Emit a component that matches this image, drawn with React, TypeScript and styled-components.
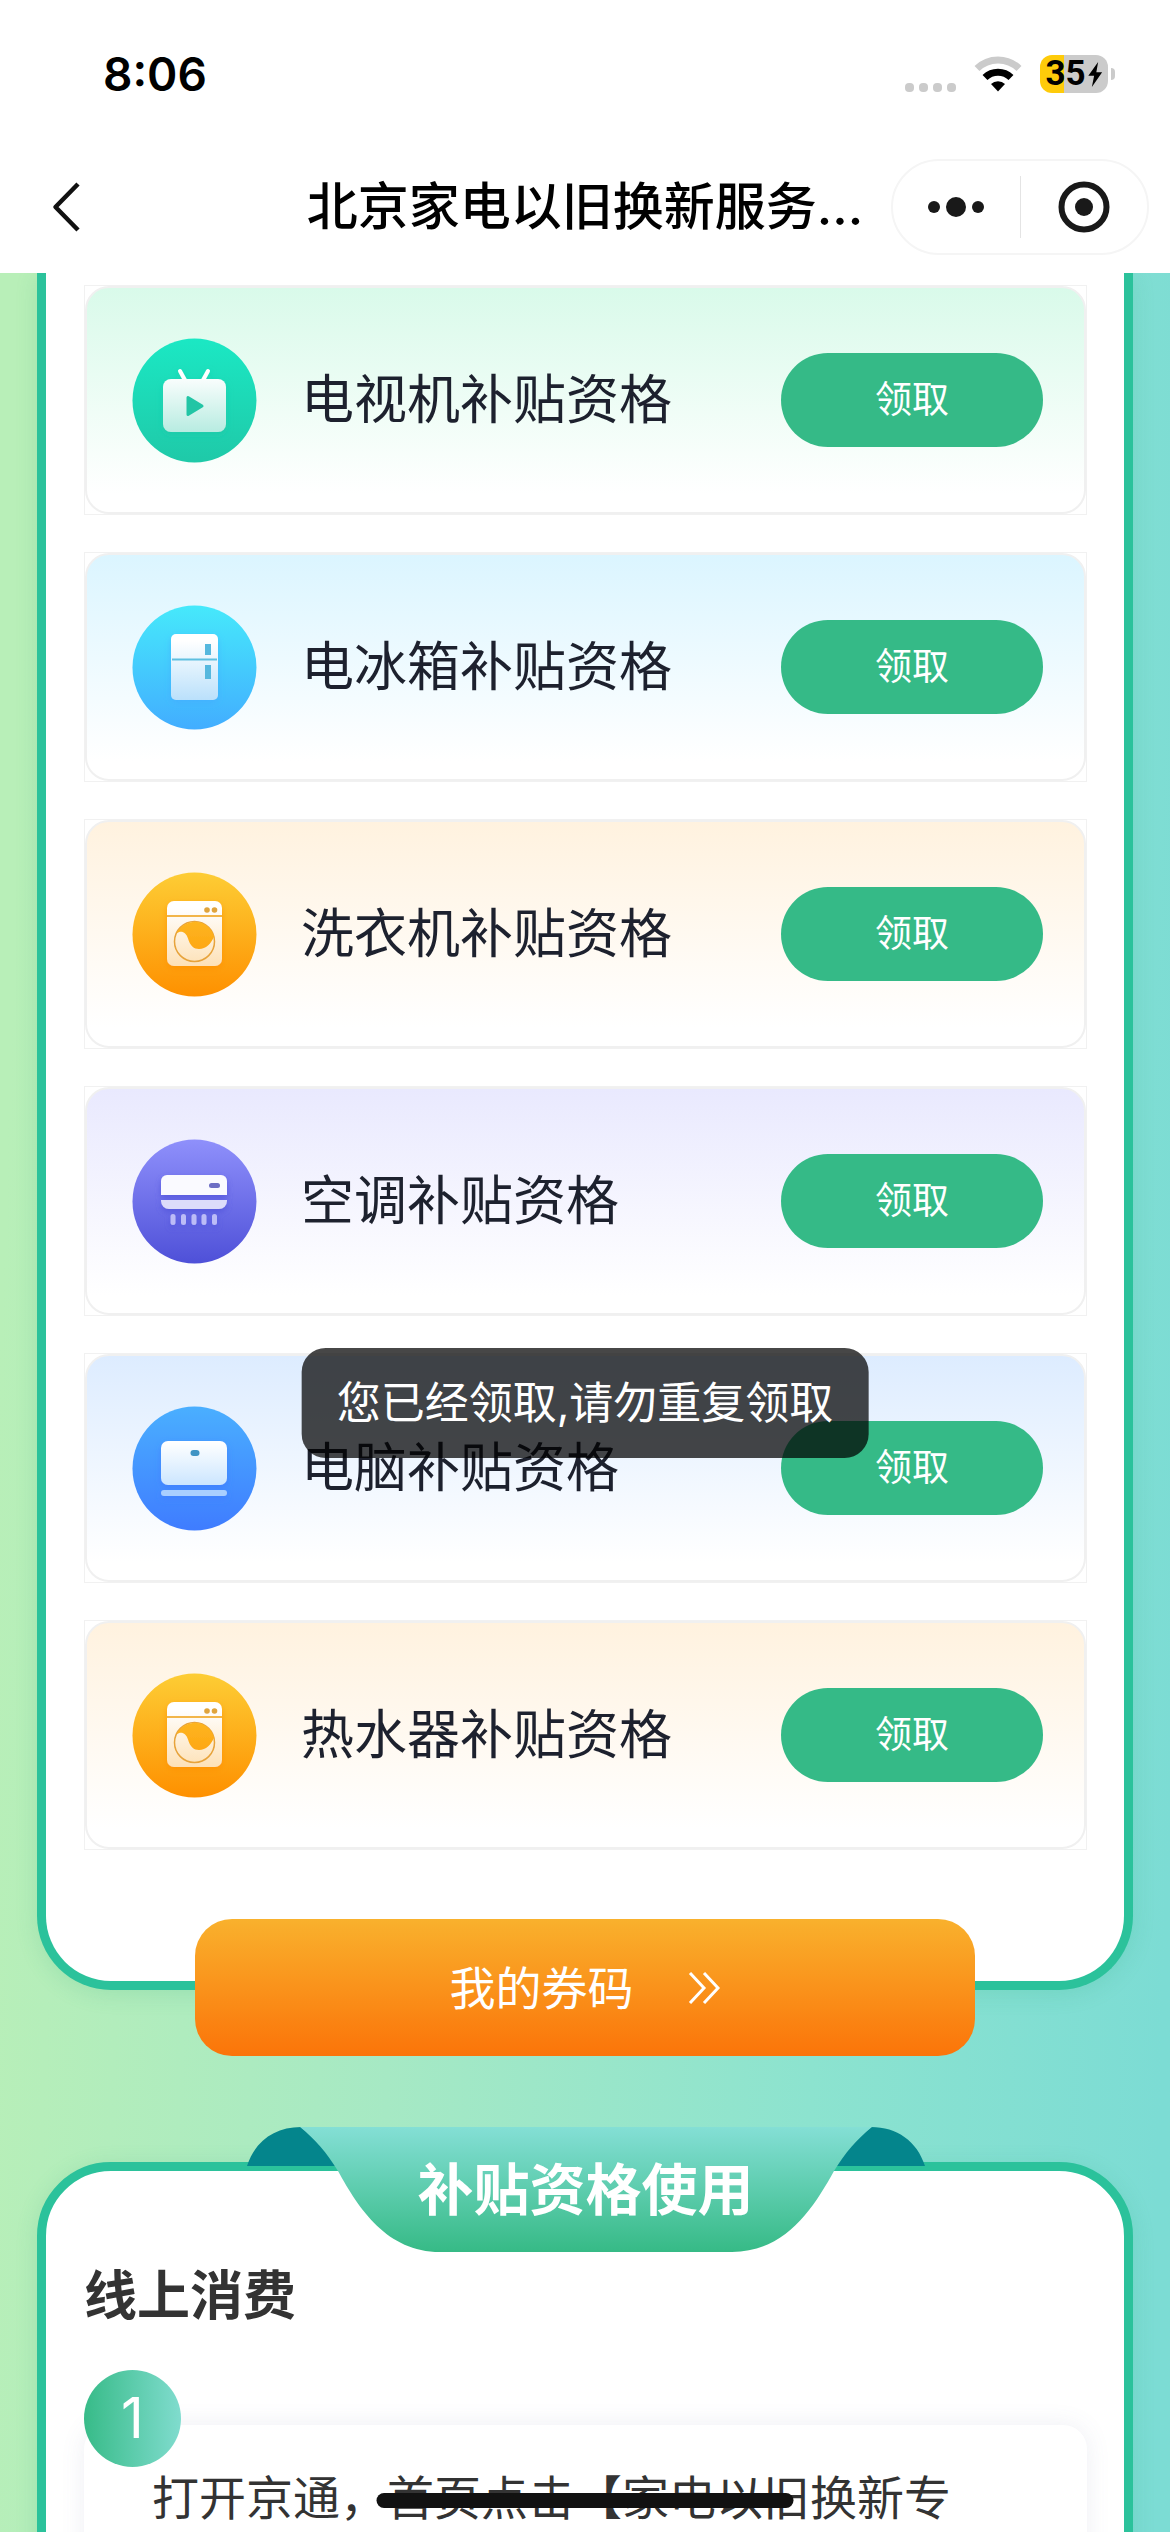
import React from "react";
import styled, { createGlobalStyle } from "styled-components";

const GlobalStyle = createGlobalStyle`
  *, *::before, *::after { box-sizing: border-box; }
  body {
    margin: 0;
    font-family: Inter, "Noto Sans CJK SC", sans-serif;
    color: #333;
    background: #fff;
  }
  h1, h2, h3, p, ul { margin: 0; padding: 0; }
  ul { list-style: none; }
  button {
    font: inherit;
    color: inherit;
    border: 0;
    padding: 0;
    background: none;
    cursor: pointer;
  }
  svg { display: block; }
`;

const Screen = styled.div`
  position: relative;
  display: flex;
  flex-direction: column;
  height: 100vh;
  overflow: hidden;
`;

const Header = styled.header`
  flex: none;
  background: #fff;
  color: #000;
`;

const StatusBar = styled.div`
  display: flex;
  align-items: center;
  justify-content: space-between;
  height: 141px;
  padding: 7px 55px 0 103px;
`;

const Clock = styled.time`
  font-size: 46px;
  line-height: 56px;
  font-weight: 600;
`;

const StatusIcons = styled.div`
  display: flex;
  align-items: center;
  gap: 18px;
`;

const Battery = styled.div`
  display: flex;
  align-items: center;
  gap: 3px;
`;

const BatteryBody = styled.div`
  display: flex;
  align-items: center;
  justify-content: center;
  gap: 1px;
  width: 68px;
  height: 38px;
  border-radius: 12px;
  background: linear-gradient(90deg, #fecb0a 35%, #cbcbcb 35%);
  font-family: Roboto, sans-serif;
  font-size: 35px;
  line-height: 38px;
  font-weight: 700;
`;

const BatteryTip = styled.div`
  width: 4px;
  height: 12px;
  border-radius: 0 4px 4px 0;
  background: #cbcbcb;
`;

const NavBar = styled.nav`
  display: grid;
  grid-template-columns: 1fr auto 1fr;
  align-items: center;
  height: 132px;
  padding: 0 21px;
`;

const BackButton = styled.button`
  justify-self: start;
  padding: 0 31px;
`;

const NavTitle = styled.h1`
  font-size: 51px;
  line-height: 74px;
  font-weight: 500;
  white-space: nowrap;
`;

const Capsule = styled.div`
  justify-self: end;
  display: flex;
  align-items: center;
  width: 258px;
  height: 96px;
  border: 2px solid #f5f5f5;
  border-radius: 48px;
`;

const CapsuleButton = styled.button`
  flex: 1;
  display: flex;
  justify-content: center;
  & + & {
    border-left: 1px solid #e4e4e4;
  }
`;

const View = styled.div`
  position: relative;
  flex: 1;
  min-height: 0;
`;

const Content = styled.main`
  height: 100%;
  padding: 0 37px;
  overflow-y: auto;
  scrollbar-width: none;
  background: linear-gradient(92deg, #b8efb8 3%, #a6e9c4 36%, #8ce3cf 70%, #7cdcd4 98%);
`;

const Card = styled.section<{ $scrolled?: boolean }>`
  padding: ${(p) => (p.$scrolled ? "12px 37px 131px 38px" : "0 37px 44px 38px")};
  border: 9px solid #2bc29b;
  border-top-width: ${(p) => (p.$scrolled ? "0" : "9px")};
  border-radius: ${(p) => (p.$scrolled ? "0 0 74px 74px" : "74px")};
  background: #fff;
  box-shadow: 0 4px 22px rgba(40, 160, 110, 0.16);
`;

const SubsidyList = styled.ul`
  display: flex;
  flex-direction: column;
  gap: 37px;
`;

const SubsidyFrame = styled.li`
  border: 1px solid #f1f1f1;
`;

const SubsidyRow = styled.div<{ $tint: string }>`
  display: flex;
  align-items: center;
  gap: 44px;
  height: 228px;
  padding: 0 41px 0 45px;
  border: 2px solid #f0f0f0;
  border-radius: 24px;
  background: linear-gradient(180deg, ${(p) => p.$tint}, #fff 92%);
`;

const SubsidyName = styled.h2`
  flex: 1;
  font-size: 53px;
  line-height: 74px;
  font-weight: 400;
  color: #1d212e;
  white-space: nowrap;
`;

const ClaimButton = styled.button`
  width: 262px;
  height: 94px;
  border-radius: 47px;
  background: #35ba87;
  color: #fff;
  font-size: 37px;
  line-height: 56px;
`;

const CouponButton = styled.button`
  position: relative;
  display: flex;
  align-items: center;
  justify-content: center;
  gap: 54px;
  width: 780px;
  max-width: 100%;
  height: 137px;
  margin: -71px auto 106px;
  border-radius: 37px;
  background: linear-gradient(180deg, #f9b12d, #fb7409);
  color: #fff;
  font-size: 46px;
  line-height: 74px;
`;

const Banner = styled.div`
  position: relative;
  display: grid;
  place-items: center;
  width: 678px;
  height: 125px;
  margin: -44px auto 7px;
  & > * {
    grid-area: 1 / 1;
  }
`;

const BannerTitle = styled.h2`
  position: relative;
  font-size: 56px;
  line-height: 74px;
  font-weight: 700;
  color: #fff;
`;

const SectionTitle = styled.h3`
  font-size: 53px;
  line-height: 74px;
  font-weight: 700;
`;

const Step = styled.div`
  display: flex;
  flex-direction: column;
  margin-top: 37px;
`;

const StepNumber = styled.span`
  position: relative;
  width: 97px;
  height: 97px;
  margin-bottom: -42px;
  border-radius: 50%;
  background: linear-gradient(90deg, #37bb88, #80dcce);
  color: #fff;
  font-size: 56px;
  line-height: 97px;
  text-align: center;
`;

const StepBody = styled.p`
  min-height: 300px;
  padding: 36px 68px;
  border-radius: 24px;
  background: #fff;
  box-shadow: 0 0 24px rgba(90, 100, 150, 0.1);
  font-size: 47px;
  line-height: 74px;
`;

const Toast = styled.div`
  position: absolute;
  top: 50%;
  left: 50%;
  transform: translate(-50%, -50%);
  padding: 18px 35px;
  border-radius: 24px;
  background: rgba(0, 0, 0, 0.72);
  color: #fff;
  font-size: 44px;
  line-height: 74px;
  white-space: nowrap;
`;

const HomeIndicator = styled.div`
  position: absolute;
  bottom: 24px;
  left: 50%;
  width: 417px;
  height: 15px;
  border-radius: 8px;
  background: #111;
  transform: translateX(-50%);
`;

type Kind = "tv" | "fridge" | "washer" | "ac" | "pc";

const discs: Record<Kind, [string, string]> = {
  tv: ["#1be8c4", "#1fc9a8"],
  fridge: ["#46e9fb", "#42adff"],
  washer: ["#fdcd35", "#fe9000"],
  ac: ["#8f90fb", "#4e50d8"],
  pc: ["#4aafff", "#3f7cff"],
};

const metals: Record<Kind, string> = {
  tv: "#b5ebe0",
  fridge: "#b9e0fb",
  washer: "#fde0b4",
  ac: "#cfcff8",
  pc: "#b7dcff",
};

function Glyph({ kind, body, ink }: { kind: Kind; body: string; ink: string }) {
  switch (kind) {
    case "tv":
      return (
        <>
          <path d="M48 33l6 11M76 33l-6 11" stroke="#fff" strokeWidth="4" strokeLinecap="round" />
          <rect x="31" y="41" width="63" height="53" rx="8" fill={body} />
          <path d="M56 59.500v17l14-8.500z" fill="#22c5a5" stroke="#22c5a5" strokeWidth="3" strokeLinejoin="round" />
        </>
      );
    case "fridge":
      return (
        <>
          <rect x="39" y="29" width="47" height="66" rx="5" fill={body} />
          <path d="M40 54.500h45" stroke="#5fbfe0" strokeWidth="2" />
          <path d="M73 39h6v11h-6zM73 60h6v14h-6z" fill="#56b8de" />
        </>
      );
    case "washer":
      return (
        <>
          <rect x="35" y="29" width="55" height="65" rx="7" fill={body} />
          <path d="M35 44h55" stroke="#f2b54a" strokeWidth="2" />
          <circle cx="75" cy="38" r="2.800" fill="#e0a43c" />
          <circle cx="82.500" cy="38" r="2.800" fill="#e0a43c" />
          <circle cx="62.500" cy="69.500" r="20" fill={body} stroke="#e7a33a" strokeWidth="1.500" />
          <path d="M44.500 61.500C49 58 54 60 56 66.500C58 74 62 77 67 77C74 77 79 72 82 64.500A20 20 0 0 0 44.500 61.500Z" fill={ink} />
        </>
      );
    case "ac":
      return (
        <>
          <path d="M29 56V42a6 6 0 0 1 6-6h54a6 6 0 0 1 6 6v14z" fill="#fafaff" />
          <path d="M29 61h66v1a8 8 0 0 1-8 8H37a8 8 0 0 1-8-8z" fill="#dcdcfa" />
          <rect x="77" y="44" width="11" height="5" rx="2.500" fill="#6d6ec4" />
          <path d="M41 77.500v6M51.500 77.500v6M62 77.500v6M72 77.500v6M82.500 77.500v6" stroke="#bcbcf7" strokeWidth="5" strokeLinecap="round" />
        </>
      );
    case "pc":
      return (
        <>
          <rect x="29" y="35" width="66" height="44" rx="7" fill={body} />
          <rect x="58.500" y="44" width="9" height="6" rx="3" fill="#3f94c4" />
          <rect x="29" y="84" width="66" height="6" rx="3" fill="#a9cfff" />
        </>
      );
  }
}

function ApplianceIcon({ kind, id }: { kind: Kind; id: string }) {
  const [top, bottom] = discs[kind];
  return (
    <svg width="125" height="125" viewBox="0 0 125 125" fill="none" aria-hidden="true">
      <defs>
        <linearGradient id={`${id}-disc`} gradientUnits="userSpaceOnUse" x1="62" y1="0" x2="62" y2="125">
          <stop stopColor={top} />
          <stop offset="1" stopColor={bottom} />
        </linearGradient>
        <linearGradient id={`${id}-body`} gradientUnits="userSpaceOnUse" x1="62" y1="36" x2="62" y2="96">
          <stop stopColor="#fff" />
          <stop offset="1" stopColor={metals[kind]} />
        </linearGradient>
        <filter id={`${id}-shade`} x="-20%" y="-20%" width="140%" height="150%">
          <feDropShadow dx="0" dy="3" stdDeviation="3" floodColor={bottom} floodOpacity="0.7" />
        </filter>
      </defs>
      <circle cx="62.500" cy="62.500" r="62" fill={`url(#${id}-disc)`} />
      <g filter={`url(#${id}-shade)`}>
        <Glyph kind={kind} body={`url(#${id}-body)`} ink={`url(#${id}-disc)`} />
      </g>
    </svg>
  );
}

const subsidies: { id: string; name: string; kind: Kind; tint: string }[] = [
  { id: "tv", name: "电视机补贴资格", kind: "tv", tint: "#d9faea" },
  { id: "fridge", name: "电冰箱补贴资格", kind: "fridge", tint: "#dbf5ff" },
  { id: "washer", name: "洗衣机补贴资格", kind: "washer", tint: "#fff2df" },
  { id: "ac", name: "空调补贴资格", kind: "ac", tint: "#e9e9fe" },
  { id: "pc", name: "电脑补贴资格", kind: "pc", tint: "#ddecff" },
  { id: "heater", name: "热水器补贴资格", kind: "washer", tint: "#fff2df" },
];

export default function App() {
  return (
    <Screen lang="zh-CN">
      <GlobalStyle />
      <Header>
        <StatusBar>
          <Clock>8:06</Clock>
          <StatusIcons>
            <svg width="51" height="36" viewBox="0 0 51 36" fill="#cbcbcb" aria-hidden="true">
              <rect x="0" y="27" width="9" height="9" rx="4" />
              <rect x="14" y="27" width="9" height="9" rx="4" />
              <rect x="28" y="27" width="9" height="9" rx="4" />
              <rect x="42" y="27" width="9" height="9" rx="4" />
            </svg>
            <svg width="48" height="36" viewBox="0 0 48 36" fill="none" aria-hidden="true">
              <path d="M3 12.500a30 30 0 0 1 42 0" stroke="#cbcbcb" strokeWidth="7" />
              <path d="M11 21.500a18.500 18.500 0 0 1 26 0" stroke="#000" strokeWidth="7" />
              <path d="M24 35.500l-7-7.500a10 10 0 0 1 14 0z" fill="#000" />
            </svg>
            <Battery>
              <BatteryBody>
                35
                <svg width="16" height="25" viewBox="0 0 17 28" fill="#000" aria-hidden="true">
                  <path d="M12 0L1 15.500h6.500L5 28L16.500 11.500H10z" />
                </svg>
              </BatteryBody>
              <BatteryTip />
            </Battery>
          </StatusIcons>
        </StatusBar>
        <NavBar>
          <BackButton aria-label="返回">
            <svg width="28" height="50" viewBox="0 0 28 50" fill="none" stroke="#111" strokeWidth="4.500">
              <path d="M26 2L3.500 25L26 48" strokeLinejoin="round" />
            </svg>
          </BackButton>
          <NavTitle>北京家电以旧换新服务...</NavTitle>
          <Capsule>
            <CapsuleButton aria-label="更多">
              <svg width="58" height="62" viewBox="0 0 58 62" fill="#191919">
                <circle cx="7" cy="31" r="6" />
                <circle cx="29" cy="31" r="10" />
                <circle cx="51" cy="31" r="6" />
              </svg>
            </CapsuleButton>
            <CapsuleButton aria-label="关闭">
              <svg width="54" height="62" viewBox="0 0 54 62" fill="none">
                <circle cx="27" cy="31" r="22.500" stroke="#191919" strokeWidth="6" />
                <circle cx="27" cy="31" r="9" fill="#191919" />
              </svg>
            </CapsuleButton>
          </Capsule>
        </NavBar>
      </Header>

      <View>
        <Content>
          <Card $scrolled>
            <SubsidyList>
              {subsidies.map((s) => (
                <SubsidyFrame key={s.id}>
                  <SubsidyRow $tint={s.tint}>
                    <ApplianceIcon kind={s.kind} id={s.id} />
                    <SubsidyName>{s.name}</SubsidyName>
                    <ClaimButton>领取</ClaimButton>
                  </SubsidyRow>
                </SubsidyFrame>
              ))}
            </SubsidyList>
          </Card>

          <CouponButton>
            我的券码
            <svg width="33" height="32" viewBox="0 0 33 32" fill="none" stroke="#fff" strokeWidth="3" aria-hidden="true">
              <path d="M2 1l14 15L2 31M16 1l14 15L16 31" />
            </svg>
          </CouponButton>

          <Card>
            <Banner>
              <svg width="678" height="125" viewBox="0 0 678 125" aria-hidden="true">
                <defs>
                  <linearGradient id="banner" x1="0" y1="0" x2="0" y2="1">
                    <stop stopColor="#84dfd5" />
                    <stop offset="1" stopColor="#36ba86" />
                  </linearGradient>
                </defs>
                <path d="M0 39C8 14 28 0 54 0L96 39zM678 39C670 14 650 0 624 0L582 39z" fill="#04858c" />
                <path d="M53 0C68 12 80 26 91 44C112 82 140 125 193 125H485C538 125 566 82 587 44C598 26 610 12 625 0z" fill="url(#banner)" />
              </svg>
              <BannerTitle>补贴资格使用</BannerTitle>
            </Banner>
            <SectionTitle>线上消费</SectionTitle>
            <Step>
              <StepNumber>1</StepNumber>
              <StepBody>打开京通，首页点击【家电以旧换新专</StepBody>
            </Step>
          </Card>
        </Content>
        <Toast role="status">您已经领取,请勿重复领取</Toast>
      </View>
      <HomeIndicator />
    </Screen>
  );
}
